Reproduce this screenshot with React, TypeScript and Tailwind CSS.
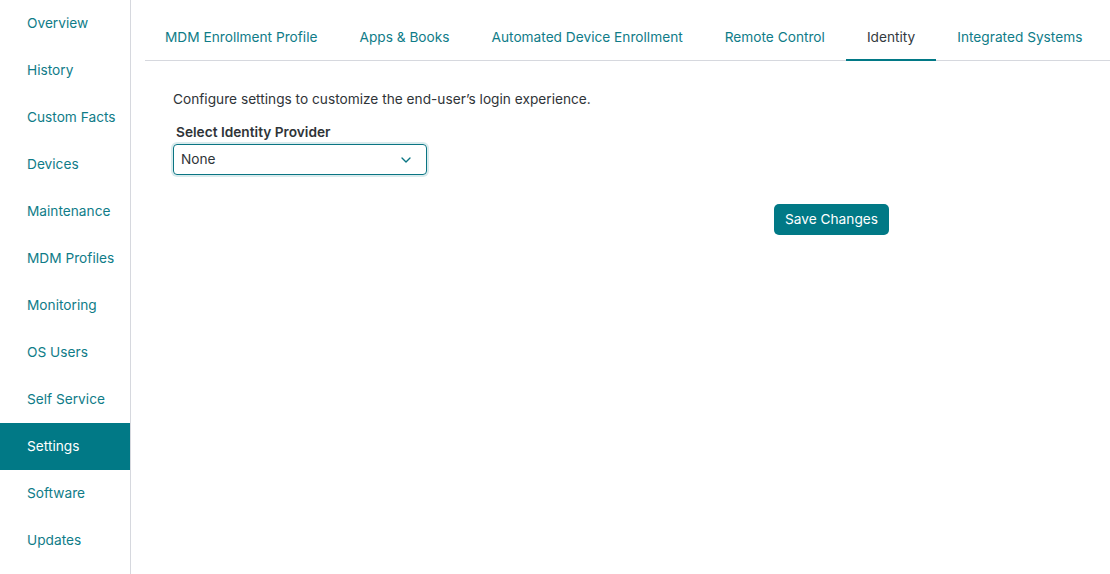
import { ChevronDown } from 'lucide-react';

const navItems = [
  'Overview',
  'History',
  'Custom Facts',
  'Devices',
  'Maintenance',
  'MDM Profiles',
  'Monitoring',
  'OS Users',
  'Self Service',
  'Settings',
  'Software',
  'Updates',
];

const tabs = [
  'MDM Enrollment Profile',
  'Apps & Books',
  'Automated Device Enrollment',
  'Remote Control',
  'Identity',
  'Integrated Systems',
];

export default function App() {
  return (
    <div
      className="flex w-[1110px] h-[574px] bg-white overflow-hidden"
      style={{ fontFamily: 'Inter, "Noto Sans", sans-serif' }}
    >
      {/* Sidebar */}
      <nav className="w-[131px] shrink-0 border-r border-[#d6d8de] flex flex-col">
        {navItems.map(item => (
          <div
            key={item}
            className={`h-[47px] flex items-center pl-[27px] text-[13.7px] ${
              item === 'Settings' ? 'bg-[#017986] text-white' : 'text-[#0f7c88]'
            }`}
          >
            {item}
          </div>
        ))}
      </nav>

      {/* Main */}
      <main className="flex-1 min-w-0 pl-[14px]">
        <div className="flex border-b border-[#d6d8de] h-[61px]">
          {tabs.map(tab => (
            <div
              key={tab}
              className={`px-[21px] first:pl-[20px] shrink-0 whitespace-nowrap flex items-center h-[61px] pt-[16px] text-[13.7px] border-b-2 -mb-px ${
                tab === 'Identity'
                  ? 'text-[#333a40] border-[#017986]'
                  : 'text-[#0f7c88] border-transparent'
              }`}
            >
              {tab}
            </div>
          ))}
        </div>

        <div className="pl-[28px] pt-[28px] w-[744px]">
          <p className="text-[13.7px] text-[#2f3438] leading-[20px]">
            Configure settings to customize the end-user’s login experience.
          </p>
          <div className="mt-[14px] pl-[3px] text-[13.7px] font-semibold text-[#2f3438] leading-[18px]">
            Select Identity Provider
          </div>
          <div className="mt-[3px] w-[254px] h-[31px] rounded-[4px] border border-[#0a7583] shadow-[0_0_0_2px_rgba(1,121,134,0.15)] flex items-center justify-between pl-[7px] pr-[12px] text-[13.7px] text-[#2f3438]">
            <span>None</span>
            <ChevronDown size={16} strokeWidth={2} className="text-[#0a7583]" />
          </div>
          <div className="flex justify-end mt-[29px]">
            <button className="h-[31px] px-[11px] rounded-[5px] bg-[#017986] text-white text-[13.7px]">
              Save Changes
            </button>
          </div>
        </div>
      </main>
    </div>
  );
}
